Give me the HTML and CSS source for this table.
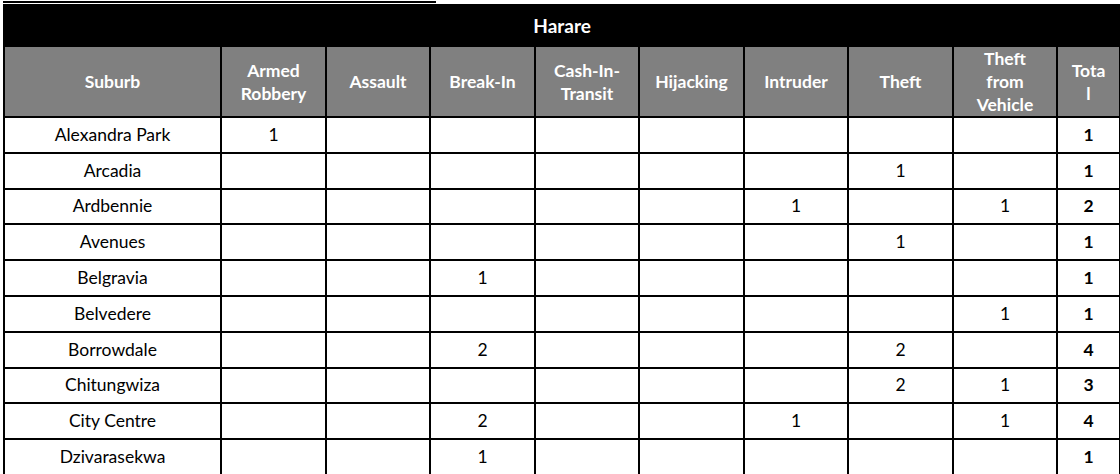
FILE: index.html
```html
<!DOCTYPE html>
<html>
<head>
<meta charset="utf-8">
<link rel="stylesheet" href="styles.css">
</head>
<body>
<div class="topline"></div>
<table class="sheet">
  <colgroup>
    <col class="c-suburb">
    <col class="c-num"><col class="c-num2"><col class="c-num"><col class="c-num2">
    <col class="c-num"><col class="c-num2"><col class="c-num"><col class="c-num2">
    <col class="c-total">
  </colgroup>
  <thead>
    <tr class="title-row"><th colspan="10">Harare</th></tr>
    <tr class="head-row">
      <th>Suburb</th>
      <th>Armed<br>Robbery</th>
      <th>Assault</th>
      <th>Break-In</th>
      <th>Cash-In-<br>Transit</th>
      <th>Hijacking</th>
      <th>Intruder</th>
      <th>Theft</th>
      <th>Theft<br>from<br>Vehicle</th>
      <th>Tota<br>l</th>
    </tr>
  </thead>
  <tbody>
    <tr><td>Alexandra Park</td><td>1</td><td></td><td></td><td></td><td></td><td></td><td></td><td></td><td class="tot">1</td></tr>
    <tr><td>Arcadia</td><td></td><td></td><td></td><td></td><td></td><td></td><td>1</td><td></td><td class="tot">1</td></tr>
    <tr><td>Ardbennie</td><td></td><td></td><td></td><td></td><td></td><td>1</td><td></td><td>1</td><td class="tot">2</td></tr>
    <tr><td>Avenues</td><td></td><td></td><td></td><td></td><td></td><td></td><td>1</td><td></td><td class="tot">1</td></tr>
    <tr><td>Belgravia</td><td></td><td></td><td>1</td><td></td><td></td><td></td><td></td><td></td><td class="tot">1</td></tr>
    <tr><td>Belvedere</td><td></td><td></td><td></td><td></td><td></td><td></td><td></td><td>1</td><td class="tot">1</td></tr>
    <tr><td>Borrowdale</td><td></td><td></td><td>2</td><td></td><td></td><td></td><td>2</td><td></td><td class="tot">4</td></tr>
    <tr><td>Chitungwiza</td><td></td><td></td><td></td><td></td><td></td><td></td><td>2</td><td>1</td><td class="tot">3</td></tr>
    <tr><td>City Centre</td><td></td><td></td><td>2</td><td></td><td></td><td>1</td><td></td><td>1</td><td class="tot">4</td></tr>
    <tr><td>Dzivarasekwa</td><td></td><td></td><td>1</td><td></td><td></td><td></td><td></td><td></td><td class="tot">1</td></tr>
  </tbody>
</table>
</body>
</html>
```
FILE: styles.css
```css
html, body {
  margin: 0;
  padding: 0;
  background: #fff;
  overflow: hidden;
}
body {
  font-family: Lato, "Carlito", "Liberation Sans", sans-serif;
  color: #000;
}
.topline {
  margin: 1px 0 0 3px;
  width: 433px;
  height: 2px;
  background: #000;
}
.sheet {
  margin: 1px 0 0 3px;
  border-collapse: collapse;
  table-layout: fixed;
  width: 1118px;
}
.c-suburb { width: 217px; }
.c-num { width: 105px; }
.c-num2 { width: 104px; }
.c-total { width: 63px; }

.sheet th,
.sheet td {
  border: 2px solid #000;
  padding: 0;
  text-align: center;
  vertical-align: middle;
}
.title-row th {
  background: #000;
  color: #fff;
  font-weight: 700;
  font-size: 19px;
  height: 39px;
}
.head-row th {
  background: #808080;
  color: #fff;
  font-weight: 700;
  font-size: 17.5px;
  line-height: 23px;
  height: 69px;
}
.sheet td {
  font-size: 17.5px;
  line-height: 20px;
  height: 33.8px;
}
.sheet td.tot {
  font-weight: 700;
}
```
